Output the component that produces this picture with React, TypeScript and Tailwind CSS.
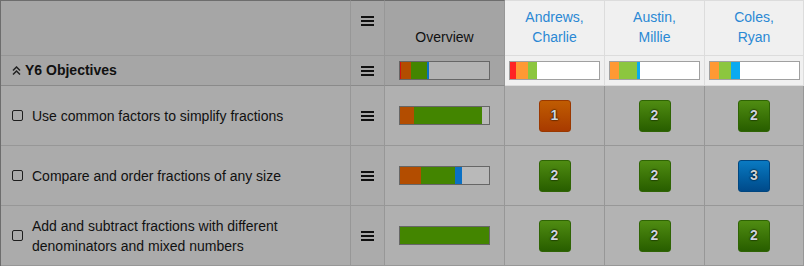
import React from 'react';

type Seg = { color: string; w: number };

const students = [
  {
    first: 'Andrews,',
    last: 'Charlie',
    bar: [
      { color: '#ff2424', w: 6 },
      { color: '#ff9933', w: 12 },
      { color: '#8cc63f', w: 9 },
    ],
  },
  {
    first: 'Austin,',
    last: 'Millie',
    bar: [
      { color: '#ff9933', w: 9 },
      { color: '#8cc63f', w: 18 },
      { color: '#0aaaf0', w: 3 },
    ],
  },
  {
    first: 'Coles,',
    last: 'Ryan',
    bar: [
      { color: '#ff9933', w: 9 },
      { color: '#8cc63f', w: 12 },
      { color: '#0aaaf0', w: 9 },
    ],
  },
];

const objectives = [
  {
    title: ['Use common factors to simplify fractions'],
    overview: [
      { color: '#b34d00', w: 14 },
      { color: '#438500', w: 68 },
    ],
    levels: [1, 2, 2],
  },
  {
    title: ['Compare and order fractions of any size'],
    overview: [
      { color: '#b34d00', w: 21 },
      { color: '#438500', w: 34 },
      { color: '#0a70c4', w: 7 },
    ],
    levels: [2, 2, 3],
  },
  {
    title: ['Add and subtract fractions with different', 'denominators and mixed numbers'],
    overview: [{ color: '#438500', w: 89 }],
    levels: [2, 2, 2],
  },
];

// Bars icon (three lines)
function Bars() {
  return (
    <svg width="13" height="10" viewBox="0 0 13 10" className="block">
      <rect x="0" y="0" width="13" height="2" fill="#111" />
      <rect x="0" y="4" width="13" height="2" fill="#111" />
      <rect x="0" y="8" width="13" height="2" fill="#111" />
    </svg>
  );
}

function ChevronsUp() {
  return (
    <svg width="9" height="9" viewBox="0 0 9 9" className="block">
      <polyline points="1,4.5 4.5,1 8,4.5" fill="none" stroke="#222" strokeWidth="1.5" />
      <polyline points="1,8.5 4.5,5 8,8.5" fill="none" stroke="#222" strokeWidth="1.5" />
    </svg>
  );
}

function ProgressBar({ segs, rest, border }: { segs: Seg[]; rest: string; border: string }) {
  return (
    <div className={`flex w-[91px] h-[19px] border ${border}`} style={{ backgroundColor: rest }}>
      {segs.map((s, i) => (
        <div key={i} className="h-full" style={{ width: s.w, backgroundColor: s.color }} />
      ))}
    </div>
  );
}

function Badge({ level }: { level: number }) {
  const styles: Record<number, string> = {
    1: 'bg-gradient-to-b from-[#c05c02] to-[#a83a00] border-[#9a3800]',
    2: 'bg-gradient-to-b from-[#4f8c12] to-[#285e00] border-[#2f6404]',
    3: 'bg-gradient-to-b from-[#0a7ac2] to-[#004a8a] border-[#004680]',
  };
  return (
    <div
      className={`w-8 h-8 rounded-[3px] border flex items-center justify-center text-[14px] font-bold text-[#cfd5db] [text-shadow:0_0_2px_#000,0_0_1px_#000] ${styles[level]}`}
    >
      {level}
    </div>
  );
}

export default function App() {
  const cell = 'border-r border-b border-[#979797]';
  return (
    <div className="w-[804px] h-[266px] overflow-hidden font-['Liberation_Sans',Arial,sans-serif] text-[14px] text-[#111111]">
      <div className="grid grid-cols-[350px_34px_120px_100px_100px_99px] grid-rows-[56px_30px_60px_60px_60px] border-l border-[#6d6d6d]">
        {/* header row */}
        <div className={`${cell} border-t border-t-[#6d6d6d] bg-[#a6a6a6]`} />
        <div className={`${cell} border-t border-t-[#6d6d6d] bg-[#a6a6a6] flex justify-center pt-[15px]`}>
          <Bars />
        </div>
        <div className={`${cell} border-t border-t-[#6d6d6d] bg-[#a4a4a4] flex items-end justify-center pb-[8px] leading-5`}>
          Overview
        </div>
        {students.map((s) => (
          <div
            key={s.first}
            className="border-r border-b border-t border-[#dcdcdc] bg-[#f0f0f0] flex flex-col items-center justify-end pb-[8px] leading-5 text-[#2a88d4]"
          >
            <span>{s.first}</span>
            <span>{s.last}</span>
          </div>
        ))}

        {/* group row */}
        <div className="border-r border-b border-r-[#979797] border-b-[#8a8a8a] bg-[#a6a6a6] flex items-center pl-[11px] gap-[4px]">
          <ChevronsUp />
          <span className="font-bold">Y6 Objectives</span>
        </div>
        <div className="border-r border-b border-r-[#979797] border-b-[#8a8a8a] bg-[#a6a6a6] flex items-center justify-center">
          <Bars />
        </div>
        <div className="border-r border-b border-r-[#979797] border-b-[#8a8a8a] bg-[#a4a4a4] flex items-center justify-center">
          <ProgressBar
            segs={[
              { color: '#d01010', w: 1 },
              { color: '#b34d00', w: 10 },
              { color: '#438500', w: 16 },
              { color: '#0a70c4', w: 2 },
            ]}
            rest="#b3b3b3"
            border="border-[#666666]"
          />
        </div>
        {students.map((s) => (
          <div key={s.first} className="border-r border-b border-[#dcdcdc] bg-[#f0f0f0] flex items-center justify-center">
            <ProgressBar segs={s.bar} rest="#ffffff" border="border-[#a0a0a0]" />
          </div>
        ))}

        {/* objective rows */}
        {objectives.map((o, idx) => (
          <React.Fragment key={idx}>
            <div className={`${cell} bg-[#ababab] flex items-center pl-[11px]`}>
              <div className="w-[11px] h-[11px] shrink-0 rounded-[2px] border-[1.5px] border-[#1e1e1e]" />
              <div className="ml-[9px] leading-5">
                {o.title.map((t) => (
                  <div key={t}>{t}</div>
                ))}
              </div>
            </div>
            <div className={`${cell} bg-[#ababab] flex items-center justify-center`}>
              <Bars />
            </div>
            <div className={`${cell} bg-[#b0b0b0] flex items-center justify-center`}>
              <ProgressBar segs={o.overview} rest="#b9b9b9" border="border-[#666666]" />
            </div>
            {o.levels.map((lv, i) => (
              <div key={i} className={`${cell} bg-[#b3b3b3] flex items-center justify-center`}>
                <Badge level={lv} />
              </div>
            ))}
          </React.Fragment>
        ))}
      </div>
    </div>
  );
}
